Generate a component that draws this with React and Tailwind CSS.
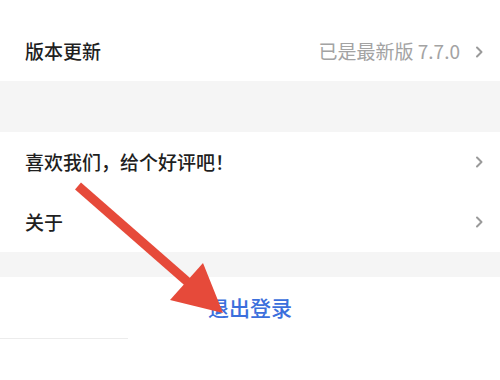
const font = { fontFamily: '"Noto Sans CJK SC", "Noto Sans", sans-serif' }

function Chevron() {
  return (
    <svg width="10" height="14" viewBox="0 0 10 14" className="shrink-0">
      <path d="M3 2.5 L7.5 7 L3 11.5" fill="none" stroke="#9a9a9a" strokeWidth="2" strokeLinecap="round" strokeLinejoin="round" />
    </svg>
  )
}

function Row({ label, value, className = '' }) {
  return (
    <div className={`flex items-center justify-between pl-[25px] pr-[16px] ${className}`}>
      <span className="text-[19px] font-medium text-[#1f1f1f]">{label}</span>
      <div className="flex items-center gap-[14px]">
        {value && <span className="text-[19px] text-[#a3a3a3]">{value}</span>}
        <Chevron />
      </div>
    </div>
  )
}

export default function App() {
  return (
    <div className="relative w-[500px] h-[380px] overflow-hidden bg-white" style={font}>
      <Row label="版本更新" value="已是最新版 7.7.0" className="h-[81px] pt-[22px]" />
      <div className="h-[51px] bg-[#f5f5f5]" />
      <Row label="喜欢我们，给个好评吧！" className="h-[60px]" />
      <Row label="关于" className="h-[60px]" />
      <div className="h-[25px] bg-[#f5f5f5]" />
      <div className="h-[61px] flex items-center justify-center">
        <span className="text-[21px] font-medium text-[#3b6fdc]">退出登录</span>
      </div>
      <div className="w-[128px] h-px bg-[#ececec]" />

      <svg className="absolute left-0 top-0" width="500" height="380" viewBox="0 0 500 380">
        <line x1="78" y1="186" x2="190" y2="284" stroke="#e64a3a" strokeWidth="9" strokeLinecap="butt" />
        <polygon points="170,300 203,263 223,313" fill="#e64a3a" />
      </svg>
    </div>
  )
}
